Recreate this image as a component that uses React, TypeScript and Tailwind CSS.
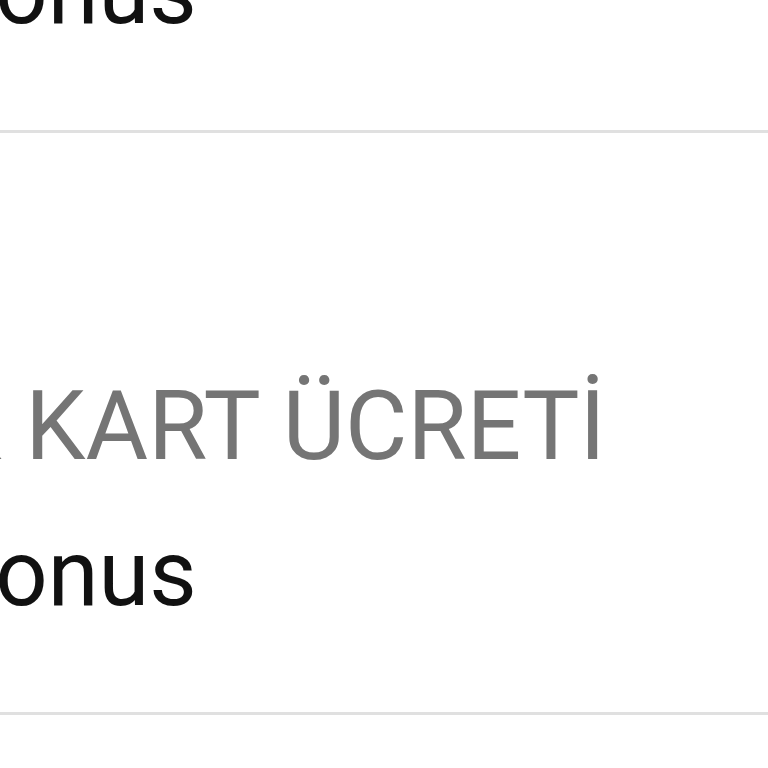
const rows = [
  { label: 'YILLIK KART ÜCRETİ', value: 'Bonus' },
  { label: 'YILLIK KART ÜCRETİ', value: 'Bonus' },
];

function Row({ label, value }: { label: string; value: string }) {
  return (
    <div className="flex flex-col border-b-[3px] border-[#e0e0e0] pt-[245px] pb-[92px] pl-[65px]">
      <span className="-ml-[337px] whitespace-nowrap text-[96px] leading-none text-[#757575]">{label}</span>
      <span className="mt-[54px] -ml-[127px] whitespace-nowrap text-[92px] leading-none text-[#111111]">{value}</span>
    </div>
  );
}

export default function App() {
  return (
    <div className="h-[768px] w-[768px] overflow-hidden bg-white" style={{ fontFamily: 'Roboto, "Noto Sans", sans-serif' }}>
      <div className="-mt-[449px] w-[900px]">
        {rows.map((r, i) => (
          <Row key={i} label={r.label} value={r.value} />
        ))}
      </div>
    </div>
  );
}
